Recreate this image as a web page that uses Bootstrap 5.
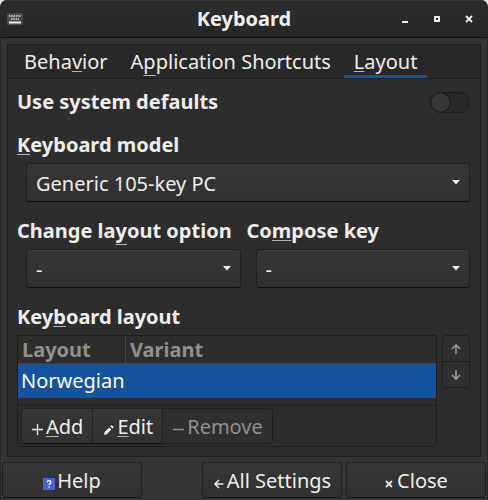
<!DOCTYPE html>
<html lang="en">
<head>
<meta charset="utf-8">
<meta name="viewport" content="width=device-width, initial-scale=1">
<title>Keyboard</title>
<link href="https://cdn.jsdelivr.net/npm/bootstrap@5.3.0/dist/css/bootstrap.min.css" rel="stylesheet">
<style>
body { font-family: "Noto Sans", sans-serif; font-size: 20px; line-height: 28px; color: #eeeeec; background: #e4e4e4; }
.win { background: #343434; border-radius: 7px 7px 0 0; overflow: hidden; min-height: 100vh; border-left: 1px solid #292929; border-right: 1px solid #292929; }
.titlebar { height: 38px; background: linear-gradient(#2d2d2d, #262626); border-top: 1px solid #383838; border-bottom: 1px solid #101010; display: grid; grid-template-columns: 1fr auto 1fr; }
.titlebar h1 { font-size: 20px; line-height: 28px; font-weight: 700; }
.controls { gap: 20px; padding-right: 12px; }
.wm { border: 0; background: none; color: #eeeeec; padding: 0; width: 12px; height: 12px; display: flex; }
.book { border: 1px solid #1f1f1f; background: #2d2d2d; margin: 6px 6px 5px; }
.tabs { background: #282828; border-bottom: 1px solid #1f1f1f; gap: 3px; padding: 0 6px; }
.tabs .nav-link, .tabs .nav-link:hover, .tabs .nav-link:focus { color: #eeeeec; padding: 3px 10px 0; height: 33px; border: 0; border-bottom: 3px solid transparent; border-radius: 0; background: none; line-height: 27px; white-space: nowrap; }
.tabs .nav-link.active { border-bottom-color: #15539e; }
.pane { padding: 9px 10px 9px 9px; }
.lbl { font-size: 20px; font-weight: 700; line-height: 28px; margin: 0; display: block; white-space: nowrap; }
u { text-decoration: underline 1px #b4b4b2; text-underline-offset: 2px; text-decoration-skip-ink: none; }
u.low { text-underline-offset: 6px; }
.form-switch.sys { min-height: 20px; padding: 0; margin: 0; display: flex; }
.sys .form-check-input, .sys .form-check-input:focus { width: 40px; height: 21px; margin: 0; border: 1px solid #1e1e1e; box-shadow: none; background-color: #282828; background-size: 21px 21px; background-position: -1px center;
 background-image: url("data:image/svg+xml,%3Csvg xmlns='http://www.w3.org/2000/svg' viewBox='0 0 21 21'%3E%3Ccircle cx='10.5' cy='10.5' r='9.8' fill='%23373737' stroke='%231a1a1a' stroke-width='1.2'/%3E%3C/svg%3E"); }
.combo.form-select { height: 39px; border: 1px solid #202020; border-bottom-color: #0f0f0f; border-radius: 4px; color: #eeeeec; font-size: 20px; line-height: 28px; padding: 6px 30px 3px 9px; box-shadow: inset 0 1px #393939;
 background-color: #333; background-image: url("data:image/svg+xml,%3Csvg xmlns='http://www.w3.org/2000/svg' viewBox='0 0 8 5'%3E%3Cpath d='M0 0h8L4 4.5z' fill='%23eeeeec'/%3E%3C/svg%3E"), linear-gradient(#363636, #313131); background-size: 8px 5px, 100% 100%; background-position: right 9px center, 0 0; }
.indent { padding: 4px 0 0 9px; }
.pair { display: grid; grid-template-columns: 1fr 1fr; gap: 6px; }
.field { margin-bottom: 15px; }
.listrow { padding-top: 4px; gap: 5px; }
.listbox { border: 1px solid #1f1f1f; border-radius: 2px 2px 4px 4px; }
.layouts { margin: 0; width: 100%; table-layout: fixed; border-collapse: separate; border-spacing: 0; }
.layouts th { color: #8f8f8f; line-height: 27px; padding: 0 4px; border-bottom: 1px solid #3a4656; }
.layouts th:first-child { width: 108px; border-right: 1px solid #454545; }
.layouts td { background: #15539e; color: #fff; line-height: 28px; padding: 3px 3px; }
.tools { border-top: 2px solid #252525; margin-top: 6px; padding: 2px 3px; }
.btn.gtk { --bs-btn-color: #eeeeec; --bs-btn-hover-color: #fff; --bs-btn-disabled-color: #8f8f8f; --bs-btn-disabled-opacity: 1; height: 36px; font-size: 20px; line-height: 28px; padding: 3px 9px 2px; border: 1px solid #202020; border-bottom-color: #121212; border-radius: 4px; background: linear-gradient(#363636, #313131); box-shadow: inset 0 1px #393939; display: flex; align-items: center; justify-content: center; white-space: nowrap; }
.btn.gtk svg { margin: 6px 2px 0 0; flex: none; }
.btn.gtk:disabled { background: #2f2f2f; border-color: #1f1f1f; box-shadow: none; }
.btn-group > .btn.gtk:not(:last-child) { border-top-right-radius: 0; border-bottom-right-radius: 0; }
.btn-group > .btn.gtk:not(:first-child) { border-top-left-radius: 0; border-bottom-left-radius: 0; }
.btn.gtk.arrow { width: 28px; height: 27px; padding: 0; }
.btn.gtk.arrow:first-child { border-radius: 4px 4px 0 0; }
.btn.gtk.arrow:last-child { border-radius: 0 0 4px 4px; }
.btn.gtk.arrow svg { margin: 0; }
.foot { padding: 0 1px 1px; gap: 4px; }
.foot .gtk { min-width: 140px; }
</style>
<script src="https://cdn.jsdelivr.net/npm/bootstrap@5.3.0/dist/js/bootstrap.bundle.min.js"></script>
</head>
<body>
<main class="win">
  <header class="titlebar align-items-center">
    <svg class="ms-1" width="20" height="14" viewBox="-1 0 20 14" aria-hidden="true"><rect x="1" y="1" width="16" height="12" rx="1" fill="#4a4a4a"/><path d="M3 4h12M5 7h8" stroke="#ddd" stroke-width="1.500" stroke-dasharray="1.500 .8"/><path d="M3 10.500h12" stroke="#eee" stroke-width="2"/></svg>
    <h1 class="m-0">Keyboard</h1>
    <div class="d-flex justify-content-end controls">
      <button class="wm" aria-label="Minimize"><svg width="12" height="12"><path d="M3 9h6" stroke="#eeeeec" stroke-width="2"/></svg></button>
      <button class="wm" aria-label="Maximize"><svg width="12" height="12"><path d="M4 4h4v4H4z" fill="none" stroke="#eeeeec" stroke-width="2"/></svg></button>
      <button class="wm" aria-label="Close window"><svg width="12" height="12"><path d="M3 3l6 6M9 3L3 9" stroke="#eeeeec" stroke-width="1.800"/></svg></button>
    </div>
  </header>

  <section class="book">
    <nav class="nav flex-nowrap tabs" role="tablist">
      <button class="nav-link" role="tab">Beha<u>v</u>ior</button>
      <button class="nav-link" role="tab">A<u class="low">p</u>plication Shortcuts</button>
      <button class="nav-link active" role="tab" aria-selected="true"><u>L</u>ayout</button>
    </nav>
    <div class="pane">
      <div class="d-flex justify-content-between align-items-center field">
        <label class="lbl" for="sys">Use system defaults</label>
        <div class="form-check form-switch sys"><input class="form-check-input" type="checkbox" role="switch" id="sys"></div>
      </div>
      <div class="field">
        <label class="lbl" for="model"><u>K</u>eyboard model</label>
        <div class="indent"><select class="form-select combo" id="model"><option>Generic 105-key PC</option></select></div>
      </div>
      <div class="pair field">
        <div>
          <label class="lbl" for="change">Change la<u class="low">y</u>out option</label>
          <div class="indent"><select class="form-select combo" id="change"><option>-</option></select></div>
        </div>
        <div>
          <label class="lbl" for="compose">Co<u>m</u>pose key</label>
          <div class="indent"><select class="form-select combo" id="compose"><option>-</option></select></div>
        </div>
      </div>
      <h2 class="lbl" id="kl">Key<u>b</u>oard layout</h2>
      <div class="d-flex align-items-start listrow">
        <div class="listbox flex-grow-1">
          <table class="layouts" aria-labelledby="kl">
            <thead><tr><th scope="col">Layout</th><th scope="col">Variant</th></tr></thead>
            <tbody><tr><td>Norwegian</td><td></td></tr></tbody>
          </table>
          <div class="tools d-flex">
            <div class="btn-group">
              <button class="btn gtk"><svg width="13" height="13"><path d="M6.500 1v11M1 6.500h11" stroke="#eeeeec" stroke-width="1.300"/></svg><span><u>A</u>dd</span></button>
              <button class="btn gtk"><svg width="13" height="13"><path d="M2 12l.6-3L7.200 4.400l2.200 2.200L4.800 11.200zM8.200 3.400L9.700 2l2.200 2.200-1.500 1.400z" fill="#eeeeec"/></svg><span><u>E</u>dit</span></button>
              <button class="btn gtk" disabled><svg width="13" height="13"><path d="M1 6.500h11" stroke="#8f8f8f" stroke-width="1.300"/></svg><span>Remove</span></button>
            </div>
          </div>
        </div>
        <div class="btn-group-vertical">
          <button class="btn gtk arrow" disabled aria-label="Move up"><svg width="12" height="12"><path d="M6 11V2M2 6l4-4 4 4" fill="none" stroke="#999" stroke-width="1.600"/></svg></button>
          <button class="btn gtk arrow" disabled aria-label="Move down"><svg width="12" height="12"><path d="M6 1v9M2 6l4 4 4-4" fill="none" stroke="#999" stroke-width="1.600"/></svg></button>
        </div>
      </div>
    </div>
  </section>

  <footer class="foot d-flex">
    <button class="btn gtk me-auto"><svg width="12" height="12"><rect width="12" height="12" fill="#4a5fd8"/><path d="M4.300 4.200c0-2.200 3.600-2.200 3.600 0 0 1.300-1.800 1.300-1.800 2.900M6.100 8.300v1.400" fill="none" stroke="#fff" stroke-width="1.300"/></svg><span>Help</span></button>
    <button class="btn gtk"><svg width="12" height="12"><path d="M10.500 6H2M6 2L2 6l4 4" fill="none" stroke="#eeeeec" stroke-width="1.600"/></svg><span>All Settings</span></button>
    <button class="btn gtk"><svg width="11" height="12"><path d="M2 3l6 6M8 3L2 9" stroke="#eeeeec" stroke-width="1.800"/></svg><span>Close</span></button>
  </footer>
</main>
</body>
</html>
